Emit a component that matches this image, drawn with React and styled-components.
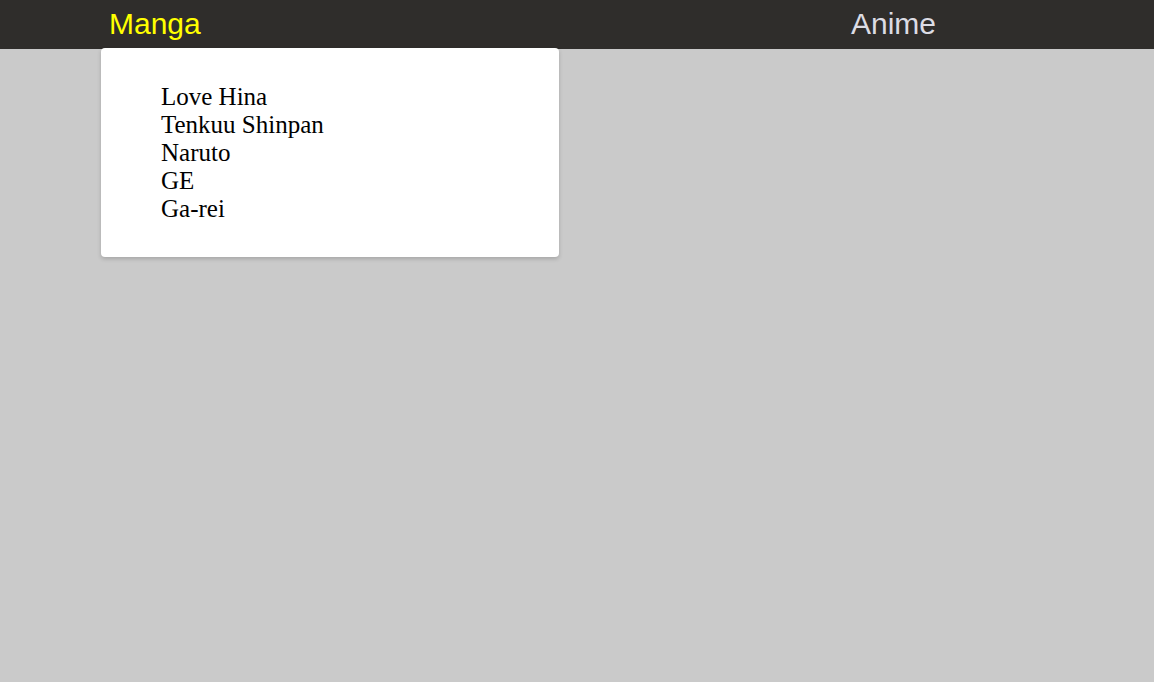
import React from "react";
import styled, { createGlobalStyle } from "styled-components";

const Global = createGlobalStyle`
  html, body { margin: 0; padding: 0; background: #cacaca; }
  body { font-family: "Liberation Serif", "Times New Roman", serif; min-height: 682px; }
`;

const NavBar = styled.nav`
  display: flex;
  align-items: flex-start;
  height: 49px;
  background: #2f2d2b;
  padding-left: 101px;
  padding-right: 210px;
`;

const NavItem = styled.div`
  position: relative;
  height: 48px;
  display: flex;
  align-items: center;
  padding: 0 8px;
  margin-left: ${(p) => (p.$push ? "auto" : "0")};
  font-family: "Liberation Sans", Arial, sans-serif;
  font-size: 30px;
  color: ${(p) => (p.$active ? "#ffff00" : "#dcdce4")};
  cursor: pointer;
`;

const Dropdown = styled.div`
  position: absolute;
  top: 100%;
  left: 0;
  z-index: 2;
  width: 458px;
  box-sizing: border-box;
  background: #fff;
  border-radius: 4px;
  box-shadow: 0 2px 4px rgba(0, 0, 0, 0.18);
  padding: 35px 0 34px;
  cursor: default;
`;

const List = styled.ul`
  list-style: none;
  margin: 0;
  padding: 0 0 0 60px;
  font-family: "Liberation Serif", "Times New Roman", serif;
  font-size: 25px;
  color: #000;
`;

const Item = styled.li`
  line-height: normal;
`;

const manga = ["Love Hina", "Tenkuu Shinpan", "Naruto", "GE", "Ga-rei"];

export default function App() {
  return (
    <>
      <Global />
      <NavBar>
        <NavItem $active>
          Manga
          <Dropdown>
            <List>
              {manga.map((m) => (
                <Item key={m}>{m}</Item>
              ))}
            </List>
          </Dropdown>
        </NavItem>
        <NavItem $push>Anime</NavItem>
      </NavBar>
    </>
  );
}
